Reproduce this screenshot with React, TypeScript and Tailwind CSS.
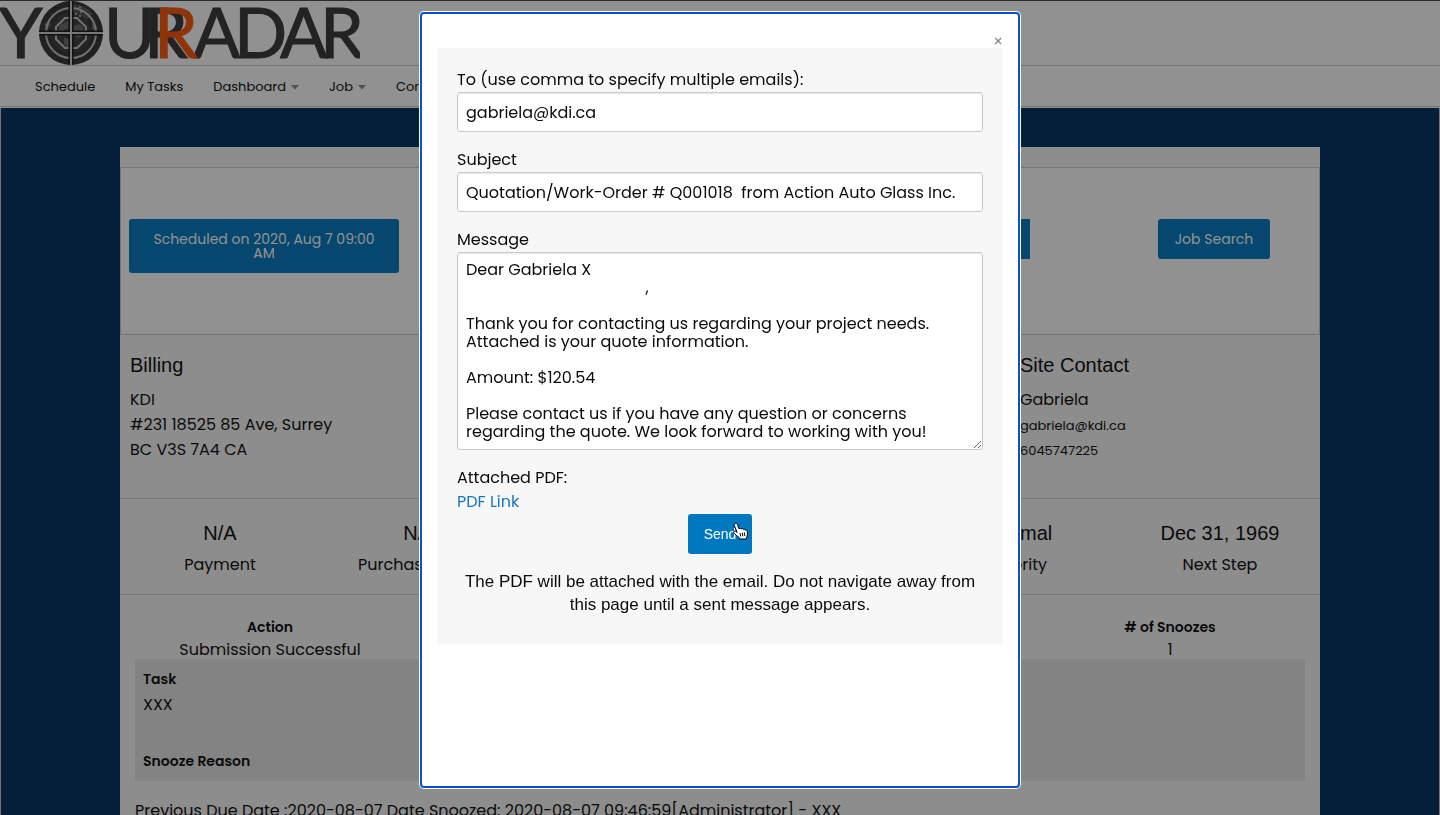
import { useState } from 'react';

const defaultMessage = `Dear Gabriela X
                                          ,

Thank you for contacting us regarding your project needs. Attached is your quote information.

Amount: $120.54

Please contact us if you have any question or concerns regarding the quote. We look forward to working with you!`;

const navItems = [
    { title: "Schedule", menu: false },
    { title: "My Tasks", menu: false },
    { title: "Dashboard", menu: true },
    { title: "Job", menu: true },
    { title: "Contacts", menu: true },
];

const stats = [
    { value: "N/A", label: "Payment" },
    { value: "N/A", label: "Purchase Order" },
    { value: "", label: "" },
    { value: "", label: "" },
    { value: "Normal", label: "Priority" },
    { value: "Dec 31, 1969", label: "Next Step" },
];

const Logo = () => (
    <svg width="360" height="64" viewBox="0 0 360 64" role="img" aria-label="YourRadar">
        <g fontFamily="Lato, sans-serif" fontSize="70" fill="#373737" stroke="#373737">
            <text x="-1 104 144 193 234 280 320" y="57">YURADAR</text>
            <text x="154" y="57" fill="#fb5607" stroke="#fb5607">R</text>
        </g>
        <circle cx="71" cy="32" r="32" fill="#333" />
        <path d="M71 32V3a29 29 0 0 1 22 10z" fill="#555" />
        <circle cx="71" cy="32" r="20" fill="#3d3d3d" />
        <path d="M60 24l7-4 4 3-3 5-4 1-2 5-4-4zM73 25l7-2 5 6-4 7-4 1-3-5zM64 37l5 1 1 5-3 4-3-5zM44 23l5-3 2 4-4 5zM92 22l5 3-1 6-4-3z" fill="#6b6b6b" />
        <g fill="none" stroke="#c4c4c4" strokeWidth="2">
            <circle cx="71" cy="32" r="25" />
            <path d="M65 17h12l9 9v12l-9 9H65l-9-9V26z" />
        </g>
        <path d="M71 0v64M39 32h64" stroke="#161616" strokeWidth="5" />
        <path d="M71 0v64M39 32h64" stroke="#d0d0d0" strokeWidth="2" />
        <g fill="#c4c4c4">
            <circle cx="80" cy="6" r="1" />
            <circle cx="76" cy="13" r="1" />
            <circle cx="80" cy="15" r="1" />
            <circle cx="81" cy="11" r="1" />
        </g>
    </svg>
);

const Caret = () => (
    <svg width="8" height="5" viewBox="0 0 8 5" aria-hidden="true">
        <path d="M0 0h8L4 4.500z" fill="#8a8a8a" />
    </svg>
);

const HandCursor = () => (
    <svg className="pointer-events-none absolute top-2 left-11" width="18" height="20" viewBox="0 0 18 20" aria-hidden="true">
        <path
            d="M3 1.500c1-.5 2 0 2.400 1L7 6.800c.6-.6 1.800-.5 2.200.2.700-.6 1.800-.4 2.200.4.800-.4 1.700 0 2 .8.900-.3 1.600.2 1.800 1l.3 3c0 1.500-.8 2.500-1 3.800v1H7.500l-.4-1.400C5.500 14.500 4.200 13 2.200 11.300 1 10.200 2 8.800 3.400 9.300l1.800 1L2.300 3.700c-.4-.9 0-1.800.7-2.200z"
            fill="#fff"
            stroke="#000"
            strokeLinejoin="round"
        />
        <path d="M8 11l.7 3.500M10.300 10.700l.5 3.500M12.500 10.500l.3 3.500" stroke="#000" />
    </svg>
);

const JobPage = () => {
    return (
        <div className="border-t border-[#444455]">
            <header className="bg-white">
                <div className="h-16">
                    <a href="#" className="block w-[360px]"><Logo /></a>
                </div>
                <nav className="border-y border-[#cacaca]">
                    <ul className="flex h-10 items-center gap-[30px] px-[35px] pt-0.5 text-[13px]">
                        {navItems.map((item) => (
                            <li key={item.title}>
                                <a href="#" className="flex items-center gap-[5px]">
                                    {item.title}
                                    {item.menu && <Caret />}
                                </a>
                            </li>
                        ))}
                    </ul>
                </nav>
            </header>
            <main className="mt-px border-x border-[#cacaca] bg-[#002f62] pt-[39px]">
                <div className="mx-auto max-w-[1200px] bg-[#f7f7f7]">
                    <div className="h-5"></div>
                    <div className="flex h-[168px] items-start border border-[#cacaca] bg-white pt-[51px] pr-[49px] pl-2 text-sm leading-[14px] text-white">
                        <button className="w-[270px] rounded-[3px] bg-[#0078c0] px-5 py-[13px] leading-[14px]">Scheduled on 2020, Aug 7 09:00 AM</button>
                        <div className="mr-32 ml-auto h-10 w-32 bg-[#0078c0]"></div>
                        <button className="h-10 w-28 rounded-[3px] bg-[#0078c0]">Job Search</button>
                    </div>
                    <div className="grid h-[163px] grid-cols-4 pt-4 leading-[25px]">
                        <div className="col-span-3 pl-2.5">
                            <h4 className="mb-2 font-['Liberation_Sans',sans-serif] text-xl leading-7">Billing</h4>
                            <p>KDI</p>
                            <p>#231 18525 85 Ave, Surrey</p>
                            <p>BC V3S 7A4 CA</p>
                        </div>
                        <div>
                            <h4 className="mb-2 font-['Liberation_Sans',sans-serif] text-xl leading-7">Site Contact</h4>
                            <p>Gabriela</p>
                            <div className="pt-px text-[13px] leading-[25px]">
                                <p>gabriela@kdi.ca</p>
                                <p>6045747225</p>
                            </div>
                        </div>
                    </div>
                    <div className="grid grid-cols-6 border-y border-[#cacaca] pt-5 pb-4 text-center">
                        {stats.map((stat, index) => (
                            <div key={index} className="h-[59px]">
                                <h4 className="mb-1.5 font-['Liberation_Sans',sans-serif] text-xl leading-7">{stat.value}</h4>
                                <p>{stat.label}</p>
                            </div>
                        ))}
                    </div>
                    <table className="mt-5 w-full table-fixed text-center">
                        <thead>
                            <tr className="text-sm leading-6">
                                <th className="font-semibold">Action</th>
                                <th colSpan={2}></th>
                                <th className="font-semibold"># of Snoozes</th>
                            </tr>
                        </thead>
                        <tbody>
                            <tr className="leading-5">
                                <td className="pt-px">Submission Successful</td>
                                <td colSpan={2}></td>
                                <td className="pt-px">1</td>
                            </tr>
                        </tbody>
                    </table>
                    <div className="mx-[15px] -mt-px h-[122px] bg-[#e6e6e6] p-2">
                        <h5 className="text-sm leading-6 font-semibold">Task</h5>
                        <p className="mb-8 pt-px leading-[25px]">XXX</p>
                        <h5 className="text-sm leading-6 font-semibold">Snooze Reason</h5>
                    </div>
                    <p className="mx-[15px] mt-[18px] pb-8">Previous Due Date :2020-08-07 Date Snoozed: 2020-08-07 09:46:59[Administrator] - XXX</p>
                </div>
            </main>
        </div>
    );
};

const EmailModal = () => {
    const [to, setTo] = useState("gabriela@kdi.ca");
    const [subject, setSubject] = useState("Quotation/Work-Order # Q001018  from Action Auto Glass Inc.");
    const [message, setMessage] = useState(defaultMessage);

    return (
        <div className="fixed inset-0 flex justify-center bg-[#0a0a0a]/45 pt-3 pb-[27px]">
            <div role="dialog" aria-modal="true" aria-label="Send email" className="h-full w-[600px] overflow-y-auto rounded border-2 border-[#0b50d0] bg-white px-[15px] pt-5 ring-1 ring-white">
                <div className="flex h-3.5 justify-end">
                    <button aria-label="Close" className="h-4 w-2.5 text-base leading-4 text-[#8a8a8a]">×</button>
                </div>
                <form className="bg-[#f7f7f7] p-5" onSubmit={(e) => e.preventDefault()}>
                    <label htmlFor="to" className="block">To (use comma to specify multiple emails):</label>
                    <input
                        id="to"
                        type="text"
                        value={to}
                        onChange={(e) => setTo(e.target.value)}
                        className="mb-4 block h-10 w-full rounded-[3px] border border-[#cacaca] bg-white px-2 shadow-[inset_0_1px_2px_rgba(10,10,10,0.1)]"
                    />
                    <label htmlFor="subject" className="block">Subject</label>
                    <input
                        id="subject"
                        type="text"
                        value={subject}
                        onChange={(e) => setSubject(e.target.value)}
                        className="mb-4 block h-10 w-full rounded-[3px] border border-[#cacaca] bg-white px-2 shadow-[inset_0_1px_2px_rgba(10,10,10,0.1)]"
                    />
                    <label htmlFor="message" className="block">Message</label>
                    <textarea
                        id="message"
                        value={message}
                        onChange={(e) => setMessage(e.target.value)}
                        className="mb-4 block h-[198px] w-full resize overflow-hidden rounded-[3px] border border-[#cacaca] bg-white p-2 leading-[18px] shadow-[inset_0_1px_2px_rgba(10,10,10,0.1)]"
                    />
                    <p>Attached PDF:</p>
                    <a href="#" className="block text-[#1779ba]">PDF Link</a>
                    <div className="relative mx-auto w-16">
                        <button className="h-10 w-16 rounded-[3px] bg-[#0078c0] font-['Liberation_Sans',sans-serif] text-sm text-white">Send</button>
                        <HandCursor />
                    </div>
                    <p className="mt-4 mb-2 text-center font-['Liberation_Sans',sans-serif] text-[17px] leading-[23px]">
                        The PDF will be attached with the email. Do not navigate away from this page until a sent message appears.
                    </p>
                </form>
            </div>
        </div>
    );
};

const App = () => {
    return (
        <div className="h-screen overflow-hidden bg-white font-['Poppins','Inter',sans-serif] text-base text-[#0a0a0a]">
            <JobPage />
            <EmailModal />
        </div>
    );
};

export default App;
